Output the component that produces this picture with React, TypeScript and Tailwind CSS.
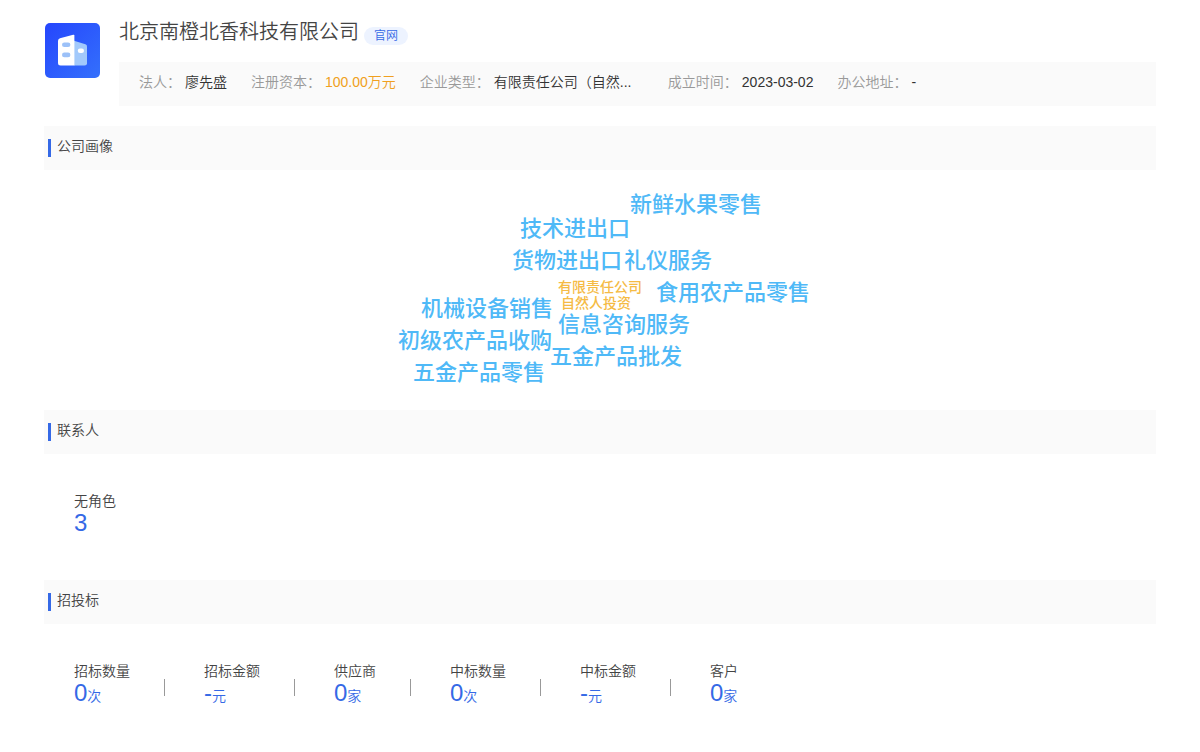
import clsx from "clsx";

const info = [
  { label: "法人", value: "廖先盛" },
  { label: "注册资本", value: "100.00万元", highlight: true },
  { label: "企业类型", value: "有限责任公司（自然...", wide: true },
  { label: "成立时间", value: "2023-03-02" },
  { label: "办公地址", value: "-" },
];

// word cloud tags, placed on a 440px wide canvas
const tags = [
  { text: "新鲜水果零售", pos: "left-[250px] top-[19px]" },
  { text: "技术进出口", pos: "left-[140px] top-[43px]" },
  { text: "货物进出口", pos: "left-[132px] top-[75px]" },
  { text: "礼仪服务", pos: "left-[244px] top-[75px]" },
  { text: "食用农产品零售", pos: "left-[276px] top-[107px]" },
  { text: "机械设备销售", pos: "left-[41px] top-[123px]" },
  { text: "信息咨询服务", pos: "left-[178px] top-[139px]" },
  { text: "初级农产品收购", pos: "left-[18px] top-[155px]" },
  { text: "五金产品批发", pos: "left-[170px] top-[171px]" },
  { text: "五金产品零售", pos: "left-[33px] top-[187px]" },
];

const typeTags = [
  { text: "有限责任公司", pos: "left-[178px] top-[109px]" },
  { text: "自然人投资", pos: "left-[181px] top-[125px]" },
];

const contacts = [{ label: "无角色", value: "3", unit: "" }];

const bids = [
  { label: "招标数量", value: "0", unit: "次" },
  { label: "招标金额", value: "-", unit: "元" },
  { label: "供应商", value: "0", unit: "家" },
  { label: "中标数量", value: "0", unit: "次" },
  { label: "中标金额", value: "-", unit: "元" },
  { label: "客户", value: "0", unit: "家" },
];

function CompanyLogo() {
  return (
    <svg viewBox="0 0 55 55" className="size-[55px] shrink-0" aria-hidden="true">
      <defs>
        <linearGradient id="logoBg" x1="0" y1="0" x2="1" y2="1">
          <stop offset="0" stopColor="#2546fd" />
          <stop offset="1" stopColor="#3470fc" />
        </linearGradient>
      </defs>
      <rect width="55" height="55" rx="5" fill="url(#logoBg)" />
      <path d="M29 17.8 40.4 21.2Q42 21.8 42 23.4V40.2Q42 42.5 39.7 42.5H29Z" fill="#a2c9fb" />
      <path d="M15 15.2 28.2 11.7Q29.4 11.4 29.4 12.6V42.5H15.6Q13 42.5 13 40V17.8Q13 15.8 15 15.2Z" fill="#fff" />
      <rect x="17" y="19.4" width="8.4" height="4.6" rx="2.3" fill="#9cc1f8" />
      <rect x="17" y="29.6" width="8.4" height="4.6" rx="2.3" fill="#9cc1f8" />
      <rect x="32.8" y="25.6" width="6.2" height="4.4" rx="2.2" fill="#fff" />
    </svg>
  );
}

function SectionTitle({ children }: { children: string }) {
  return (
    <div className="flex h-11 items-center bg-[#fafafa] pl-1">
      <span className="h-[18px] w-[3px] bg-[#3569e6]" />
      <h2 className="ml-1.5 pb-1 text-sm font-[350]">{children}</h2>
    </div>
  );
}

function StatList({ items }: { items: typeof bids }) {
  return (
    <ul className="flex flex-wrap pl-[30px] text-sm">
      {items.map((item, i) => (
        <li key={item.label} className="flex items-end">
          {i > 0 && <span className="mr-[39px] mb-[11px] ml-[34px] h-[17px] w-px bg-[#999]" />}
          <div>
            <p className="leading-[22px]">{item.label}</p>
            <p className="leading-[22px] text-[#3569e6]">
              <span className="text-2xl leading-[22px]">{item.value}</span>
              {item.unit}
            </p>
          </div>
        </li>
      ))}
    </ul>
  );
}

export default function App() {
  return (
    <main
      lang="zh-CN"
      className="min-h-screen bg-white px-11 pb-10 font-['Liberation_Sans','Noto_Sans_CJK_SC',sans-serif] font-[350] text-[#444]"
    >
      <header className="flex pt-[19px] pl-px">
        <div className="pt-1">
          <CompanyLogo />
        </div>
        <div className="ml-[19px] min-w-0 flex-1">
          <div className="flex items-end">
            <h1 className="text-xl leading-[26px] font-[350]">北京南橙北香科技有限公司</h1>
            <a href="#" className="ml-[5px] rounded-full bg-[#edf3ff] px-2.5 text-xs leading-[18px] text-[#3569e6]">
              官网
            </a>
          </div>
          <dl className="mt-[17px] flex flex-wrap gap-x-6 bg-[#fafafa] px-5 pt-[9px] pb-[13px] text-sm leading-[22px]">
            {info.map((item) => (
              <div key={item.label} className="flex gap-1">
                <dt className="text-[#999]">{item.label}：</dt>
                <dd
                  className={clsx(
                    item.highlight ? "text-[#f0a020]" : "text-[#333]",
                    item.wide && "w-[150px]"
                  )}
                >
                  {item.value}
                </dd>
              </div>
            ))}
          </dl>
        </div>
      </header>

      <section className="mt-5">
        <SectionTitle>公司画像</SectionTitle>
        <div className="relative mx-auto h-60 w-[440px] whitespace-nowrap">
          {tags.map((tag) => (
            <span key={tag.text} className={clsx("absolute text-[22px] leading-8 font-medium text-[#4fb9f7]", tag.pos)}>
              {tag.text}
            </span>
          ))}
          {typeTags.map((tag) => (
            <span key={tag.text} className={clsx("absolute text-sm leading-4 font-medium text-[#f5bb45]", tag.pos)}>
              {tag.text}
            </span>
          ))}
        </div>
      </section>

      <section>
        <SectionTitle>联系人</SectionTitle>
        <div className="pt-9 pb-[43px]">
          <StatList items={contacts} />
        </div>
      </section>

      <section>
        <SectionTitle>招投标</SectionTitle>
        <div className="pt-9">
          <StatList items={bids} />
        </div>
      </section>
    </main>
  );
}
